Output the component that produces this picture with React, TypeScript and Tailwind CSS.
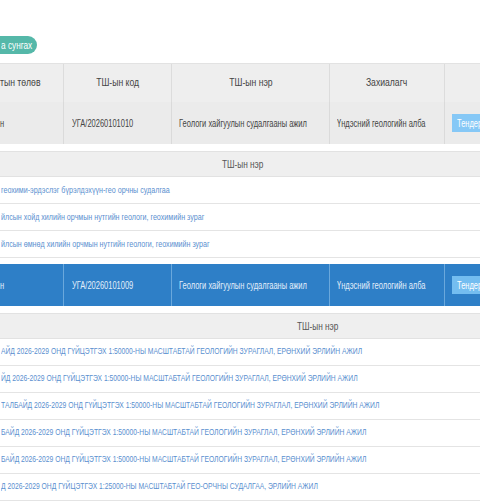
import type { ReactNode } from "react";

const outerCols = "grid grid-cols-[64px_108px_158px_115px_100px] w-[545px]";

// the page text is rendered narrow, like the original condensed face
const Sq = ({ children, center }: { children: ReactNode; center?: boolean }) => (
    <span className={`inline-block whitespace-nowrap scale-x-[0.75] ${center ? "origin-center" : "origin-left"}`}>
        {children}
    </span>
);

type Row = {
    status: string;
    code: string;
    name: string;
    client: string;
    active?: boolean;
};

const NestedTable = ({ items, width, size }: { items: string[]; width: string; size: string }) => (
    <div className="pt-[7px] pb-[6px] bg-white">
        <div className={`h-[26px] bg-[#efefef] border-y border-[#e2e2e2] flex items-center justify-center text-[11px] text-[#555] ${width}`}>
            <Sq center>ТШ-ын нэр</Sq>
        </div>
        {items.map((item, i) => (
            <div key={i} className={`h-[27px] border-b border-[#e4e4e4] flex items-center pl-[1px] text-[#5a8fcf] ${size}`}>
                <Sq>{item}</Sq>
            </div>
        ))}
    </div>
);

const DataRow = ({ row }: { row: Row }) => {
    const bg = row.active ? "bg-[#2e7fc7] text-[#e3eefa]" : "bg-[#ebebeb] text-[#444]";
    const line = row.active ? "border-[#6aa8dc]" : "border-[#dadada]";
    return (
        <div className={`${outerCols} h-[42px] text-[10px] ${bg}`}>
            <div className={`flex items-center border-r ${line}`}><Sq>{row.status}</Sq></div>
            <div className={`flex items-center pl-[8px] border-r ${line}`}><Sq>{row.code}</Sq></div>
            <div className={`flex items-center pl-[7px] border-r ${line}`}><Sq>{row.name}</Sq></div>
            <div className={`flex items-center pl-[7px] border-r ${line}`}><Sq>{row.client}</Sq></div>
            <div className="flex items-center pl-[7px]">
                <span className={`h-[18px] w-[60px] pl-[5px] flex items-center text-white text-[10px] ${row.active ? "bg-[#74bdf0]" : "bg-[#86c8f6]"}`}>
                    <Sq>Тендер</Sq>
                </span>
            </div>
        </div>
    );
};

export default function App() {
    return (
        <div className="w-[480px] h-[504px] overflow-hidden bg-white font-['Liberation_Sans',sans-serif]">
            <div className="pt-[36px]">
                <div className="h-[18px] w-[37px] rounded-r-full bg-[#55b8a9] text-white text-[11px] flex items-center pl-[1px]">
                    <Sq>а сунгах</Sq>
                </div>
            </div>
            <div className="mt-[9px]">
                <div className={`${outerCols} h-[39px] bg-[#eeeeee] border-t border-[#e2e2e2] text-[11.5px] text-[#444]`}>
                    <div className="flex items-center border-r border-[#dcdcdc]"><Sq>тын төлөв</Sq></div>
                    <div className="flex items-center justify-center border-r border-[#dcdcdc]"><Sq center>ТШ-ын код</Sq></div>
                    <div className="flex items-center justify-center border-r border-[#dcdcdc]"><Sq center>ТШ-ын нэр</Sq></div>
                    <div className="flex items-center justify-center border-r border-[#dcdcdc]"><Sq center>Захиалагч</Sq></div>
                    <div />
                </div>
                <DataRow row={{ status: "н", code: "УГА/20260101010", name: "Геологи хайгуулын судалгааны ажил", client: "Үндэсний геологийн алба" }} />
                <NestedTable
                    width="w-[486px]"
                    size="text-[9.5px]"
                    items={[
                        "геохими-эрдэслэг бүрэлдэхүүн-гео орчны судалгаа",
                        "йлсын хойд хилийн орчмын нутгийн геологи, геохимийн зураг",
                        "йлсын өмнөд хилийн орчмын нутгийн геологи, геохимийн зураг",
                    ]}
                />
                <DataRow row={{ status: "н", code: "УГА/20260101009", name: "Геологи хайгуулын судалгааны ажил", client: "Үндэсний геологийн алба", active: true }} />
                <NestedTable
                    width="w-[636px]"
                    size="text-[9px]"
                    items={[
                        "АЙД 2026-2029 ОНД ГҮЙЦЭТГЭХ 1:50000-НЫ МАСШТАБТАЙ ГЕОЛОГИЙН ЗУРАГЛАЛ, ЕРӨНХИЙ ЭРЛИЙН АЖИЛ",
                        "ЙД 2026-2029 ОНД ГҮЙЦЭТГЭХ 1:50000-НЫ МАСШТАБТАЙ ГЕОЛОГИЙН ЗУРАГЛАЛ, ЕРӨНХИЙ ЭРЛИЙН АЖИЛ",
                        "ТАЛБАЙД 2026-2029 ОНД ГҮЙЦЭТГЭХ 1:50000-НЫ МАСШТАБТАЙ ГЕОЛОГИЙН ЗУРАГЛАЛ, ЕРӨНХИЙ ЭРЛИЙН АЖИЛ",
                        "БАЙД 2026-2029 ОНД ГҮЙЦЭТГЭХ 1:50000-НЫ МАСШТАБТАЙ ГЕОЛОГИЙН ЗУРАГЛАЛ, ЕРӨНХИЙ ЭРЛИЙН АЖИЛ",
                        "БАЙД 2026-2029 ОНД ГҮЙЦЭТГЭХ 1:50000-НЫ МАСШТАБТАЙ ГЕОЛОГИЙН ЗУРАГЛАЛ, ЕРӨНХИЙ ЭРЛИЙН АЖИЛ",
                        "Д 2026-2029 ОНД ГҮЙЦЭТГЭХ 1:25000-НЫ МАСШТАБТАЙ ГЕО-ОРЧНЫ СУДАЛГАА, ЭРЛИЙН АЖИЛ",
                    ]}
                />
            </div>
        </div>
    );
}
